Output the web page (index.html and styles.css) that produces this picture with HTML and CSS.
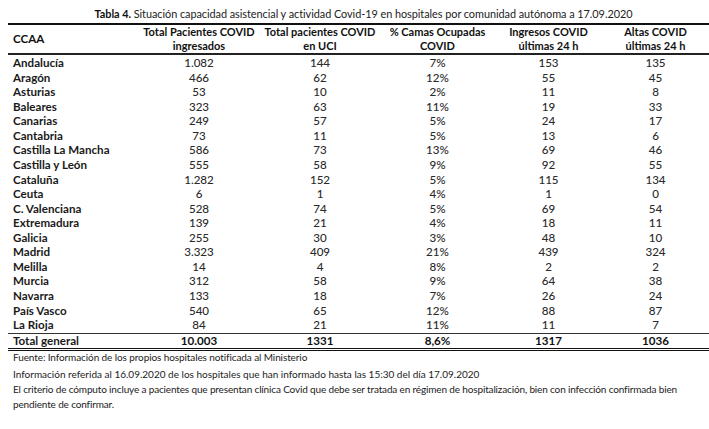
FILE: index.html
```html
<!DOCTYPE html>
<html lang="es">
<head>
<meta charset="utf-8">
<link rel="stylesheet" href="styles.css">
</head>
<body>
<div class="page">
  <div class="title"><b>Tabla 4.</b> Situación capacidad asistencial y actividad Covid-19 en hospitales por comunidad autónoma a 17.09.2020</div>
  <table class="data">
    <colgroup>
      <col class="c1"><col class="c2"><col class="c3"><col class="c4"><col class="c5"><col class="c6">
    </colgroup>
    <thead>
      <tr>
        <th class="name">CCAA</th>
        <th>Total Pacientes COVID<br>ingresados</th>
        <th>Total pacientes COVID<br>en UCI</th>
        <th>% Camas Ocupadas<br>COVID</th>
        <th>Ingresos COVID<br>últimas 24 h</th>
        <th>Altas COVID<br>últimas 24 h</th>
      </tr>
    </thead>
    <tbody>
      <tr><td class="name">Andalucía</td><td>1.082</td><td>144</td><td>7%</td><td>153</td><td>135</td></tr>
      <tr><td class="name">Aragón</td><td>466</td><td>62</td><td>12%</td><td>55</td><td>45</td></tr>
      <tr><td class="name">Asturias</td><td>53</td><td>10</td><td>2%</td><td>11</td><td>8</td></tr>
      <tr><td class="name">Baleares</td><td>323</td><td>63</td><td>11%</td><td>19</td><td>33</td></tr>
      <tr><td class="name">Canarias</td><td>249</td><td>57</td><td>5%</td><td>24</td><td>17</td></tr>
      <tr><td class="name">Cantabria</td><td>73</td><td>11</td><td>5%</td><td>13</td><td>6</td></tr>
      <tr><td class="name">Castilla La Mancha</td><td>586</td><td>73</td><td>13%</td><td>69</td><td>46</td></tr>
      <tr><td class="name">Castilla y León</td><td>555</td><td>58</td><td>9%</td><td>92</td><td>55</td></tr>
      <tr><td class="name">Cataluña</td><td>1.282</td><td>152</td><td>5%</td><td>115</td><td>134</td></tr>
      <tr><td class="name">Ceuta</td><td>6</td><td>1</td><td>4%</td><td>1</td><td>0</td></tr>
      <tr><td class="name">C. Valenciana</td><td>528</td><td>74</td><td>5%</td><td>69</td><td>54</td></tr>
      <tr><td class="name">Extremadura</td><td>139</td><td>21</td><td>4%</td><td>18</td><td>11</td></tr>
      <tr><td class="name">Galicia</td><td>255</td><td>30</td><td>3%</td><td>48</td><td>10</td></tr>
      <tr><td class="name">Madrid</td><td>3.323</td><td>409</td><td>21%</td><td>439</td><td>324</td></tr>
      <tr><td class="name">Melilla</td><td>14</td><td>4</td><td>8%</td><td>2</td><td>2</td></tr>
      <tr><td class="name">Murcia</td><td>312</td><td>58</td><td>9%</td><td>64</td><td>38</td></tr>
      <tr><td class="name">Navarra</td><td>133</td><td>18</td><td>7%</td><td>26</td><td>24</td></tr>
      <tr><td class="name">País Vasco</td><td>540</td><td>65</td><td>12%</td><td>88</td><td>87</td></tr>
      <tr><td class="name">La Rioja</td><td>84</td><td>21</td><td>11%</td><td>11</td><td>7</td></tr>
    </tbody>
    <tfoot>
      <tr><td class="name">Total general</td><td>10.003</td><td>1331</td><td>8,6%</td><td>1317</td><td>1036</td></tr>
    </tfoot>
  </table>
  <div class="notes">
    <p class="n1">Fuente: Información de los propios hospitales notificada al Ministerio</p>
    <p class="n2">Información referida al 16.09.2020 de los hospitales que han informado hasta las 15:30 del día 17.09.2020</p>
    <p class="n3">El criterio de cómputo incluye a pacientes que presentan clínica Covid que debe ser tratada en régimen de hospitalización, bien con infección confirmada bien pendiente de confirmar.</p>
  </div>
</div>
</body>
</html>
```

FILE: styles.css
```css
html, body {
  margin: 0;
  padding: 0;
  background: #ffffff;
}
body {
  font-family: "Lato", "Liberation Sans", sans-serif;
  color: #1c1c1c;
  overflow: hidden;
}
.page {
  padding: 7px 0 0 8px;
  width: 701px;
}
.title {
  font-size: 10.9px;
  letter-spacing: -0.05px;
  line-height: 14px;
  text-align: center;
  padding-left: 10px;
  white-space: nowrap;
  color: #222;
}
.title b {
  font-weight: 700;
  color: #111;
}
.data {
  border-collapse: collapse;
  table-layout: fixed;
  width: 701px;
  margin-top: 2px;
  font-size: 11.6px;
}
.c1 { width: 130px; }
.c2 { width: 122px; }
.c3 { width: 120px; }
.c4 { width: 115px; }
.c5 { width: 107px; }
.c6 { width: 107px; }
.data th {
  font-weight: 700;
  font-size: 11px;
  color: #111;
  text-align: center;
  line-height: 14px;
  height: 28px;
  padding: 0;
  vertical-align: middle;
  border-top: 2px solid #111;
  border-bottom: 2px solid #222;
}
.data th.name {
  font-size: 11.6px;
}
.data th.name, .data td.name {
  text-align: left;
  padding-left: 5px;
  font-weight: 700;
}
.data td {
  padding: 0;
  height: 14.56px;
  line-height: 14.56px;
  text-align: center;
  font-weight: 500;
  color: #2a2a2a;
}
.data td.name {
  color: #1a1a1a;
}
.data tbody tr:first-child td {
  padding-top: 1px;
}
.data tfoot td {
  border-top: 1px solid #333;
  border-bottom: 3px double #111;
  height: 14px;
  line-height: 14px;
  color: #111;
  font-weight: 700;
}
.notes {
  font-size: 10px;
  color: #222;
  padding-left: 5px;
  padding-top: 0;
}
.notes p {
  margin: 0;
}
.notes .n1 {
  line-height: 13px;
  letter-spacing: -0.1px;
}
.notes .n2 {
  margin-top: 2px;
  line-height: 16px;
}
.notes .n3 {
  width: 690px;
  line-height: 15px;
  letter-spacing: -0.15px;
}
```
